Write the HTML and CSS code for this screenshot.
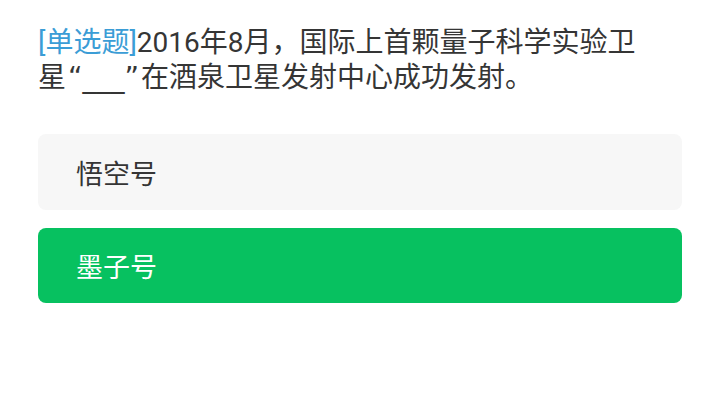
FILE: index.html
```html
<!DOCTYPE html>
<html lang="zh-CN">
<head>
<meta charset="utf-8">
<link rel="stylesheet" href="styles.css">
</head>
<body>
<div class="page">
  <p class="question"><span class="tag">[单选题]</span>2016年8月，国际上首颗量子科学实验卫星<span class="blank">“___”</span>在酒泉卫星发射中心成功发射。</p>
  <div class="options">
    <div class="option">悟空号</div>
    <div class="option selected">墨子号</div>
  </div>
</div>
</body>
</html>
```

FILE: styles.css
```css
html, body {
  margin: 0;
  padding: 0;
  background: #ffffff;
}
.page {
  padding: 25px 38px 0 38px;
  font-family: Roboto, "Noto Sans CJK SC", sans-serif;
  color: #353535;
}
.question {
  margin: 0;
  max-width: 612px;
  font-size: 28px;
  line-height: 35px;
}
.tag {
  color: #3b9dd6;
}
.blank {
  font-family: "DejaVu Sans", Roboto, sans-serif;
  padding: 0 2px;
}
.options {
  margin-top: 39px;
  display: flex;
  flex-direction: column;
  gap: 18px;
}
.option {
  height: 76px;
  border-radius: 8px;
  background: #f7f7f7;
  display: flex;
  align-items: center;
  padding-left: 38px;
  font-size: 27px;
  color: #353535;
}
.option.selected {
  background: #07c160;
  color: #ffffff;
  height: 75px;
}
```
